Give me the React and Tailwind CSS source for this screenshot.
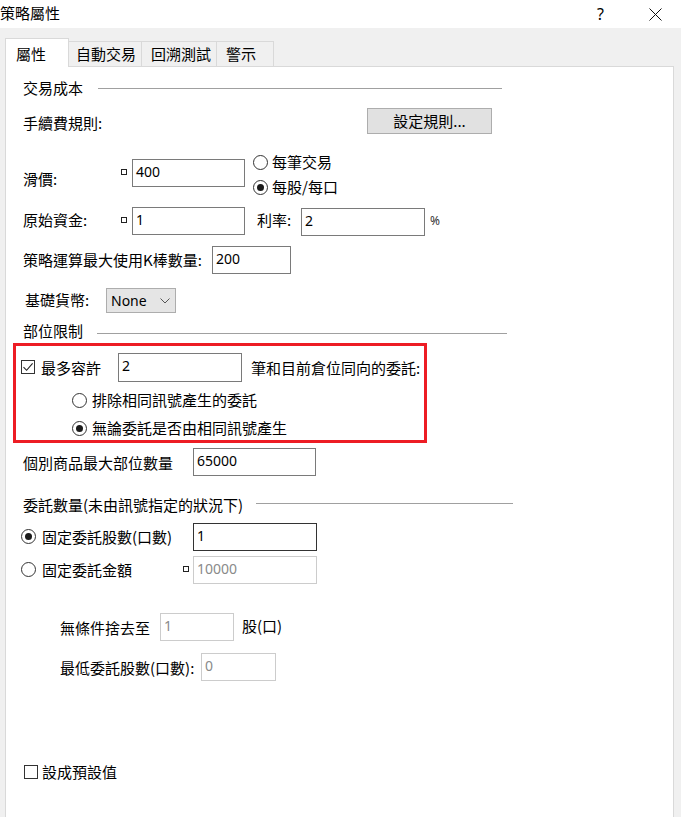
// 策略屬性 對話框：Windows 風格的表單
const LATIN = "font-['Noto_Sans','Noto_Sans_CJK_TC',sans-serif]"

function Field({ className = '', value = '', disabled = false, strong = false }) {
  const tone = disabled
    ? 'border-[#cccccc] text-[#8a8a8a]'
    : strong
      ? 'border-[#333333] text-black'
      : 'border-[#7a7a7a] text-black'
  return (
    <div className={`h-[28px] shrink-0 border bg-white px-[3px] pt-[3px] text-[14px] leading-[18px] ${LATIN} ${tone} ${className}`}>
      {value}
    </div>
  )
}

function Radio({ checked = false }) {
  return (
    <span className="flex h-[15px] w-[15px] shrink-0 items-center justify-center rounded-full border border-[#333333] bg-white">
      {checked && <span className="h-[7px] w-[7px] rounded-full bg-[#1a1a1a]" />}
    </span>
  )
}

function Check({ checked = false }) {
  return (
    <span className="flex h-[14px] w-[14px] shrink-0 items-center justify-center border border-[#333333] bg-white">
      {checked && (
        <svg width="12" height="12" viewBox="0 0 12 12" fill="none">
          <path d="M1.5 6.2 L4.6 9.3 L10.6 2.3" stroke="#222" strokeWidth="1.1" />
        </svg>
      )}
    </span>
  )
}

// 貨幣符號（小方框）
function Cur({ className = '' }) {
  return (
    <span className={`flex shrink-0 ${className}`}>
      <span className="h-[6px] w-[6px] border-[1.5px] border-[#222]" />
    </span>
  )
}

export default function App() {
  return (
    <div className="h-[817px] w-[681px] overflow-hidden bg-[#f0f0f0] font-['Noto_Sans_CJK_TC','Noto_Sans_CJK_SC',sans-serif] text-[15px] leading-[20px] text-black">
      {/* 標題列 */}
      <div className="flex h-[28px] items-center bg-white">
        <span className="-mt-[2px]">策略屬性</span>
        <span className={`ml-auto text-[16px] ${LATIN}`}>?</span>
        <svg className="ml-[45px] mr-[19px]" width="13" height="13" viewBox="0 0 13 13" fill="none">
          <path d="M0.5 0.5 L12.5 12.5 M12.5 0.5 L0.5 12.5" stroke="#111" strokeWidth="1" />
        </svg>
      </div>

      {/* 分頁 */}
      <div className="mt-[10px] flex h-[28px] items-end pl-[5px]">
        <div className="relative z-10 -mb-px h-[29px] w-[64px] border-x border-t border-[#d9d9d9] bg-white pl-[10px] pt-[5px]">屬性</div>
        <div className="h-[25px] w-[73px] border-r border-t border-[#d9d9d9] pl-[7px] pt-[2px]">自動交易</div>
        <div className="h-[25px] w-[75px] border-r border-t border-[#d9d9d9] pl-[9px] pt-[2px]">回溯測試</div>
        <div className="h-[25px] w-[57px] border-r border-t border-[#d9d9d9] pl-[9px] pt-[2px]">警示</div>
      </div>

      {/* 內容面板 */}
      <div className="ml-[5px] flex h-[760px] w-[669px] flex-col border border-[#d9d9d9] bg-white">
        {/* 交易成本 */}
        <div className="mt-[11px] flex h-[20px] items-center pl-[17px]">
          <span className="w-[75px]">交易成本</span>
          <div className="h-px w-[404px] bg-[#a0a0a0]" />
        </div>

        <div className="mt-[10px] flex h-[26px] items-start pl-[17px]">
          <span className="mt-[5px] w-[344px]">手續費規則:</span>
          <div className="flex h-[26px] w-[125px] items-center justify-center border border-[#adadad] bg-[#e1e1e1]">設定規則...</div>
        </div>

        {/* 滑價 */}
        <div className="mt-[18px] flex h-[48px] items-start pl-[17px]">
          <span className="mt-[17px] w-[98px]">滑價:</span>
          <Cur className="mt-[17px] w-[11px]" />
          <Field className="mt-[7px] w-[113px]" value="400" />
          <div className="ml-[8px] flex flex-col gap-[5px]">
            <div className="flex h-[20px] items-center gap-[4px]"><Radio />每筆交易</div>
            <div className="flex h-[20px] items-center gap-[4px]"><Radio checked />每股/每口</div>
          </div>
        </div>

        {/* 原始資金 */}
        <div className="mt-[7px] flex h-[28px] items-start pl-[17px]">
          <span className="mt-[3px] w-[98px]">原始資金:</span>
          <Cur className="mt-[10px] w-[11px]" />
          <Field className="w-[113px]" value="1" />
          <span className="ml-[12px] mt-[3px] w-[44px]">利率:</span>
          <Field className="mt-px w-[124px]" value="2" />
          <span className={`ml-[5px] mt-[6px] text-[12px] leading-[16px] text-[#333] ${LATIN}`}>%</span>
        </div>

        <div className="mt-[11px] flex h-[28px] items-start pl-[17px]">
          <span className="mt-[4px] w-[189px]">策略運算最大使用K棒數量:</span>
          <Field className="w-[79px]" value="200" />
        </div>

        {/* 基礎貨幣 */}
        <div className="mt-[14px] flex h-[25px] items-start pl-[19px]">
          <span className="mt-[2px] w-[81px]">基礎貨幣:</span>
          <div className={`flex h-[25px] w-[70px] items-center border border-[#adadad] bg-[#e5e5e5] pl-[4px] text-[14px] ${LATIN}`}>
            None
            <svg className="ml-auto mr-[5px]" width="10" height="6" viewBox="0 0 10 6" fill="none">
              <path d="M0.5 0.5 L5 5 L9.5 0.5" stroke="#555" strokeWidth="1" />
            </svg>
          </div>
        </div>

        {/* 部位限制 */}
        <div className="mt-[8px] flex h-[20px] items-start pl-[17px]">
          <span className="w-[74px]">部位限制</span>
          <div className="mt-[12px] h-px w-[410px] bg-[#a0a0a0]" />
        </div>

        <div className="ml-[7px] mt-[2px] flex h-[100px] w-[414px] flex-col border-[3px] border-[#ed1c24]">
          <div className="mt-[7px] flex h-[29px] items-start">
            <span className="ml-[5px] mt-[7px]"><Check checked /></span>
            <span className="ml-[6px] mt-[5px] w-[77px]">最多容許</span>
            <Field className="h-[29px] w-[124px]" value="2" />
            <span className="ml-[9px] mt-[5px]">筆和目前倉位同向的委託:</span>
          </div>
          <div className="ml-[56px] mt-[8px] flex h-[20px] items-center gap-[5px]"><Radio />排除相同訊號產生的委託</div>
          <div className="ml-[56px] mt-[8px] flex h-[20px] items-center gap-[5px]"><Radio checked />無論委託是否由相同訊號產生</div>
        </div>

        <div className="mt-[5px] flex h-[28px] items-start pl-[17px]">
          <span className="mt-[5px] w-[170px]">個別商品最大部位數量</span>
          <Field className="w-[123px]" value="65000" />
        </div>

        {/* 委託數量 */}
        <div className="mt-[19px] flex h-[20px] items-start pl-[17px]">
          <span className="w-[233px]">委託數量(未由訊號指定的狀況下)</span>
          <div className="mt-[8px] h-px w-[257px] bg-[#a0a0a0]" />
        </div>

        <div className="mt-[8px] flex h-[28px] items-start pl-[15px]">
          <span className="mt-[6px]"><Radio checked /></span>
          <span className="ml-[6px] mt-[4px] w-[151px]">固定委託股數(口數)</span>
          <Field className="w-[124px]" value="1" strong />
        </div>

        <div className="mt-[5px] flex h-[28px] items-start pl-[15px]">
          <span className="mt-[6px]"><Radio /></span>
          <span className="ml-[6px] mt-[4px] w-[141px]">固定委託金額</span>
          <Cur className="mt-[10px] w-[10px]" />
          <Field className="w-[124px]" value="10000" disabled />
        </div>

        <div className="mt-[29px] flex h-[28px] items-start pl-[54px]">
          <span className="mt-[5px] w-[100px]">無條件捨去至</span>
          <Field className="w-[74px]" value="1" disabled />
          <span className="ml-[8px] mt-[3px]">股(口)</span>
        </div>

        <div className="mt-[12px] flex h-[28px] items-start pl-[54px]">
          <span className="mt-[5px] w-[141px]">最低委託股數(口數):</span>
          <Field className="w-[75px]" value="0" disabled />
        </div>

        <div className="mt-[81px] flex h-[20px] items-center pl-[18px]">
          <Check />
          <span className="ml-[4px]">設成預設值</span>
        </div>
      </div>
    </div>
  )
}
